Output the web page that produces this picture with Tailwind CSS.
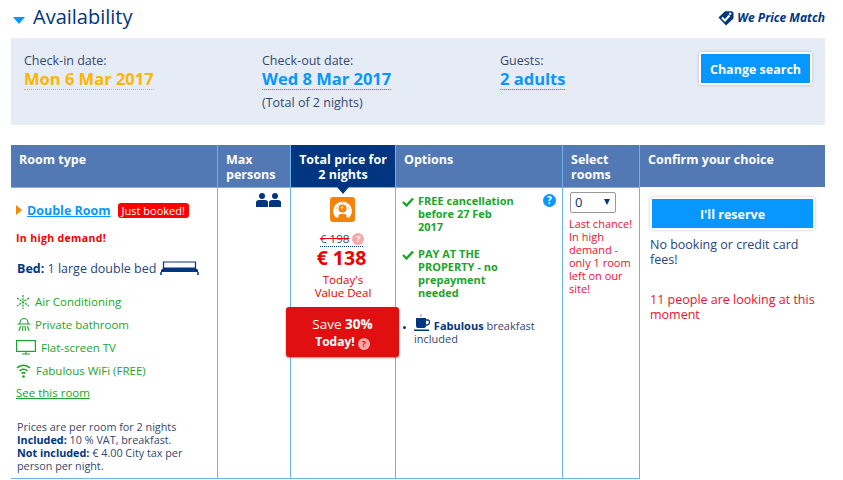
<!DOCTYPE html>
<html lang="en">
<head>
    <meta charset="UTF-8">
    <title>Availability</title>
    <script src="https://cdn.jsdelivr.net/npm/@tailwindcss/browser@4"></script>
</head>
<body class="bg-white font-['Open_Sans','Noto_Sans',sans-serif] text-[#003580] h-[480px] w-[843px] overflow-hidden">
    <div class="pl-[11px] pr-[18px]">
        <!-- heading -->
        <div class="flex items-center justify-between h-[38px]">
            <div class="flex items-center">
                <span class="ml-[2px] w-0 h-0 border-x-[6px] border-x-transparent border-t-[7px] border-t-[#0896ff] mt-[2px]"></span>
                <h2 class="ml-[8px] text-[20px] leading-[34px] text-[#003580] -mt-[5px]">Availability</h2>
            </div>
            <div class="flex items-center -mt-[3px]">
                <svg width="16" height="16" viewBox="0 0 16 16"><path d="M0.5 7.5 L7 1.2 H14 L15.5 2.5 V8.5 L8 15.5 Z" fill="#003580"/><circle cx="12.2" cy="3.8" r="1.2" fill="#fff"/><path d="M4 7.5 L7 10.5 L11.5 5.5" fill="none" stroke="#fff" stroke-width="2"/></svg>
                <span class="ml-[3px] text-[12px] font-bold italic">We Price Match</span>
            </div>
        </div>

        <!-- search summary -->
        <div class="relative h-[87px] bg-[#e6ecf6] pt-[14px] pl-[13px] grid grid-cols-[238px_238px_auto] text-[12.5px] leading-[17px] text-[#34466e]">
            <div>
                <div>Check-in date:</div>
                <a class="inline-block -mt-[1px] text-[16.5px] leading-[21px] font-bold text-[#feb500] border-b border-dotted border-[#feb500]">Mon 6 Mar 2017</a>
            </div>
            <div>
                <div>Check-out date:</div>
                <a class="inline-block -mt-[1px] text-[16.5px] leading-[21px] font-bold text-[#0896ff] border-b border-dotted border-[#0896ff]">Wed 8 Mar 2017</a>
                <div class="mt-[4px]">(Total of 2 nights)</div>
            </div>
            <div>
                <div>Guests:</div>
                <a class="inline-block -mt-[1px] text-[16.5px] leading-[21px] font-bold text-[#0896ff] border-b border-dotted border-[#0896ff]">2 adults</a>
            </div>
            <button class="absolute right-[13px] top-[14px] w-[113px] h-[33px] pt-[1px] bg-[#0896ff] border-2 border-white rounded-[2px] shadow-[0_0_3px_rgba(0,0,0,0.25)] text-white text-[12.5px] font-bold">Change search</button>
        </div>

        <!-- room table -->
        <div class="mt-[20px] grid grid-cols-[207px_73px_105px_167px_77px_185px] grid-rows-[43px_291px] h-[334px] text-[12px] leading-[13px]">
            <!-- header row -->
            <div class="bg-[#5379b4] border-r border-b border-[#6eb2ee] text-white font-bold text-[12.5px] leading-[15px] pl-[8px] pt-[7px]">Room type</div>
            <div class="bg-[#5379b4] border-r border-b border-[#6eb2ee] text-white font-bold text-[12.5px] leading-[15px] pl-[8px] pt-[7px]">Max persons</div>
            <div class="relative bg-[#003580] border-r border-b border-[#6eb2ee] text-white font-bold text-[12.5px] leading-[15px] text-center pt-[7px]">
                Total price for<br>2 nights
                <span class="absolute left-[46px] top-[42px] w-0 h-0 border-x-[6px] border-x-transparent border-t-[7px] border-t-[#003580]"></span>
            </div>
            <div class="bg-[#5379b4] border-r border-b border-[#6eb2ee] text-white font-bold text-[12.5px] leading-[15px] pl-[8px] pt-[7px]">Options</div>
            <div class="bg-[#5379b4] border-r border-b border-[#6eb2ee] text-white font-bold text-[12.5px] leading-[15px] pl-[8px] pt-[7px]">Select rooms</div>
            <div class="h-[42px] bg-[#5379b4] text-white font-bold text-[12.5px] leading-[15px] pl-[8px] pt-[7px]">Confirm your choice</div>

            <!-- room type cell -->
            <div class="border-r border-b border-[#6eb2ee] pl-[5px] pt-[14px]">
                <div class="flex items-center h-[16px]">
                    <span class="w-0 h-0 border-y-[5px] border-y-transparent border-l-[6px] border-l-[#f08a00]"></span>
                    <a class="ml-[5px] text-[12.5px] font-bold text-[#0896ff] underline">Double Room</a>
                    <span class="ml-[7px] h-[15px] px-[4px] bg-[#ff0000] rounded-[3px] text-white text-[11px] leading-[15px]">Just booked!</span>
                </div>
                <div class="mt-[14px] text-[10.5px] leading-[13px] font-bold tracking-[0.35px] text-[#f00000]">In high demand!</div>
                <div class="mt-[15px] flex items-center h-[16px] text-[12.5px] text-[#26457c] pl-[1px]">
                    <span><b class="text-[#003580]">Bed:</b> 1 large double bed</span>
                    <svg class="ml-[4px]" width="39" height="14" viewBox="0 0 39 14"><path d="M3.5 7 V1 H35.5 V7" fill="none" stroke="#003580" stroke-width="1.2"/><path d="M1 9 L4 6.5 H35 L38 9 V11 H1 Z" fill="#003580"/><path d="M1 11 V14 M38 11 V14" stroke="#003580" stroke-width="1.5"/></svg>
                </div>
                <div class="mt-[14px] text-[#1aa52a] text-[11.5px] leading-[23px]">
                    <div class="flex items-center h-[23px]">
                        <svg width="14" height="14" viewBox="0 0 14 14" fill="none" stroke="#1aa52a" stroke-width="1.2" stroke-dasharray="2.2 1"><path d="M7 0 V14 M1 3 L13 11 M13 3 L1 11"/></svg>
                        <span class="ml-[5px]">Air Conditioning</span>
                    </div>
                    <div class="flex items-center h-[23px]">
                        <svg class="ml-[1px]" width="14" height="14" viewBox="0 0 14 14" fill="none" stroke="#1aa52a" stroke-width="1.1"><path d="M0.5 6 H13.5 M3 6 V4.5 A4 4 0 0 1 11 4.5 V6 M3.5 8 L2 13 M6 8 L5.5 13 M8 8 L8.5 13 M10.5 8 L12 13"/></svg>
                        <span class="ml-[4px]">Private bathroom</span>
                    </div>
                    <div class="flex items-center h-[23px]">
                        <svg width="20" height="15" viewBox="0 0 20 15" fill="none" stroke="#1aa52a" stroke-width="1.2"><rect x="0.6" y="0.6" width="18.8" height="10.8"/><path d="M6 14 H14 M10 12 V14"/></svg>
                        <span class="ml-[5px]">Flat-screen TV</span>
                    </div>
                    <div class="flex items-center h-[23px]">
                        <svg width="15" height="14" viewBox="0 0 15 14" fill="none" stroke="#1aa52a" stroke-width="1.5"><path d="M1 4 A9 9 0 0 1 14 4 M3.5 7 A5.5 5.5 0 0 1 11.5 7 M5.5 9.5 A3 3 0 0 1 9.5 9.5"/><circle cx="7.5" cy="12.5" r="1.3" fill="#1aa52a" stroke="none"/></svg>
                        <span class="ml-[5px]">Fabulous WiFi (FREE)</span>
                    </div>
                    <a class="block underline h-[23px] -mt-[1px]">See this room</a>
                </div>
                <div class="mt-[16px] pl-[1px] w-[170px] text-[10.8px] leading-[13px] text-[#34466e]">
                    Prices are per room for 2 nights<br>
                    <b class="text-[#003580]">Included:</b> 10 % VAT, breakfast.<br>
                    <b class="text-[#003580]">Not included:</b> € 4.00 City tax per<br>person per night.
                </div>
            </div>

            <!-- max persons cell -->
            <div class="border-r border-b border-[#6eb2ee] flex justify-end pr-[9px] pt-[5px]">
                <svg width="25" height="14" viewBox="0 0 25 14" fill="#003580"><circle cx="6" cy="3" r="3"/><path d="M0 14 V9.5 Q0 7 3 7 H9 Q12 7 12 9.5 V14 Z"/><circle cx="19" cy="3" r="3"/><path d="M13 14 V9.5 Q13 7 16 7 H22 Q25 7 25 9.5 V14 Z"/></svg>
            </div>

            <!-- price cell -->
            <div class="relative border-r border-b border-[#6eb2ee] flex flex-col items-center">
                <svg class="mt-[9px] -ml-[1px]" width="25" height="25" viewBox="0 0 25 25"><rect width="25" height="25" rx="3" fill="#f5820b"/><path d="M5.5 20.5 A9.5 9.5 0 1 1 19.5 20.5 H16.5 V18 Q12.5 15.5 8.5 18 V20.5 Z" fill="#fff"/><circle cx="12.5" cy="11.5" r="4" fill="#f5820b"/><circle cx="12" cy="10.5" r="1.2" fill="#ffe0b8"/><path d="M12.5 4.5 V6 M7.5 6.5 L8.5 7.5 M17.5 6.5 L16.5 7.5 M5.5 11 H7 M18 11 H19.5" stroke="#f5a860" stroke-width="1"/></svg>
                <div class="mt-[9px] -ml-[3px] flex items-center h-[16px] w-[43px] border-b border-dotted border-[#003580]">
                    <s class="text-[11.5px] whitespace-nowrap text-[#34466e] decoration-[#e00]">€ 198</s>
                    <span class="ml-[3px] w-[12px] h-[12px] shrink-0 rounded-full bg-[#f7a8a8] text-white text-[9px] leading-[12px] font-bold text-center">?</span>
                </div>
                <div class="-ml-[3px] text-[19.5px] leading-[22px] font-bold text-[#f00000]">€ 138</div>
                <div class="mt-[4px] text-[11.5px] leading-[13px] text-center text-[#e00000]">Today's<br>Value Deal</div>
                <div class="absolute left-[-5px] top-[119px] w-[113px] h-[50px] bg-[#e01010] rounded-[3px] text-white text-center shadow-[0_1px_2px_rgba(120,60,0,0.6)] pt-[9px] z-10">
                    <div class="text-[13.5px] leading-[17px]">Save <b>30%</b></div>
                    <div class="text-[12px] leading-[17px] font-bold">Today! <span class="inline-block w-[12px] h-[12px] rounded-full bg-[#f7a8a8] text-[#e01010] text-[9px] leading-[12px] align-[-1px]">?</span></div>
                </div>
            </div>

            <!-- options cell -->
            <div class="relative border-r border-b border-[#6eb2ee] pl-[6px] pt-[6px] text-[11px] leading-[13px]">
                <div class="flex font-bold text-[#1aa52a]">
                    <svg class="mt-[3px] shrink-0" width="12" height="10" viewBox="0 0 12 10"><path d="M1 5 L4.5 8.5 L11 1.5" fill="none" stroke="#1aa52a" stroke-width="2.4"/></svg>
                    <div class="ml-[4px] w-[112px]">FREE cancellation<br>before 27 Feb<br>2017</div>
                </div>
                <div class="mt-[14px] flex font-bold text-[#1aa52a]">
                    <svg class="mt-[3px] shrink-0" width="12" height="10" viewBox="0 0 12 10"><path d="M1 5 L4.5 8.5 L11 1.5" fill="none" stroke="#1aa52a" stroke-width="2.4"/></svg>
                    <div class="ml-[4px] w-[112px]">PAY AT THE<br>PROPERTY - no<br>prepayment<br>needed</div>
                </div>
                <span class="absolute left-[147px] top-[6px] w-[13px] h-[13px] rounded-full bg-[#0896ff] text-white text-[10px] leading-[13px] font-bold text-center">?</span>
                <div class="mt-[15px] relative pl-[12px] w-[150px] text-[#34466e]">
                    <span class="absolute left-[1px] top-[12px] w-[3px] h-[3px] rounded-full bg-[#003580]"></span>
                    <svg class="inline-block align-[-2px]" width="17" height="18" viewBox="0 0 17 18" fill="#003580"><path d="M7 0 V3" stroke="#8a9ab8" fill="none"/><path d="M2 4 H12 V12 Q12 14 10 14 H4 Q2 14 2 12 Z"/><path d="M12 6 H14 Q15.5 6 15.5 8 Q15.5 11 12 11" fill="none" stroke="#003580" stroke-width="1.3"/><path d="M0 15.5 H15 V17 H0 Z"/></svg>
                    <b class="text-[#003580]">Fabulous</b> breakfast included
                </div>
            </div>

            <!-- select cell -->
            <div class="border-r border-b border-[#6eb2ee] pt-[4px] pl-[6px]">
                <div class="relative ml-[1px] w-[46px] h-[21px] border border-[#999] rounded-[2px] text-[13px] leading-[19px] pl-[4px]">
                    0
                    <span class="absolute right-[5px] top-[6px] w-0 h-0 border-x-[3.5px] border-x-transparent border-t-[6px] border-t-[#003580]"></span>
                </div>
                <div class="mt-[4px] text-[11px] leading-[13px] text-[#ee1030]">Last chance!<br>In high<br>demand -<br>only 1 room<br>left on our<br>site!</div>
            </div>

            <!-- confirm cell -->
            <div class="pl-[10px] pt-[9px] pr-[10px] text-[12.5px] leading-[15px]">
                <button class="w-[165px] h-[33px] pt-[1px] bg-[#0896ff] border-2 border-white rounded-[2px] shadow-[0_0_3px_rgba(0,0,0,0.25)] text-white text-[12.5px] font-bold">I'll reserve</button>
                <div class="mt-[7px] text-[#26457c]">No booking or credit card fees!</div>
                <div class="mt-[25px] text-[#ee1030]">11 people are looking at this moment</div>
            </div>
        </div>
    </div>
</body>
</html>
